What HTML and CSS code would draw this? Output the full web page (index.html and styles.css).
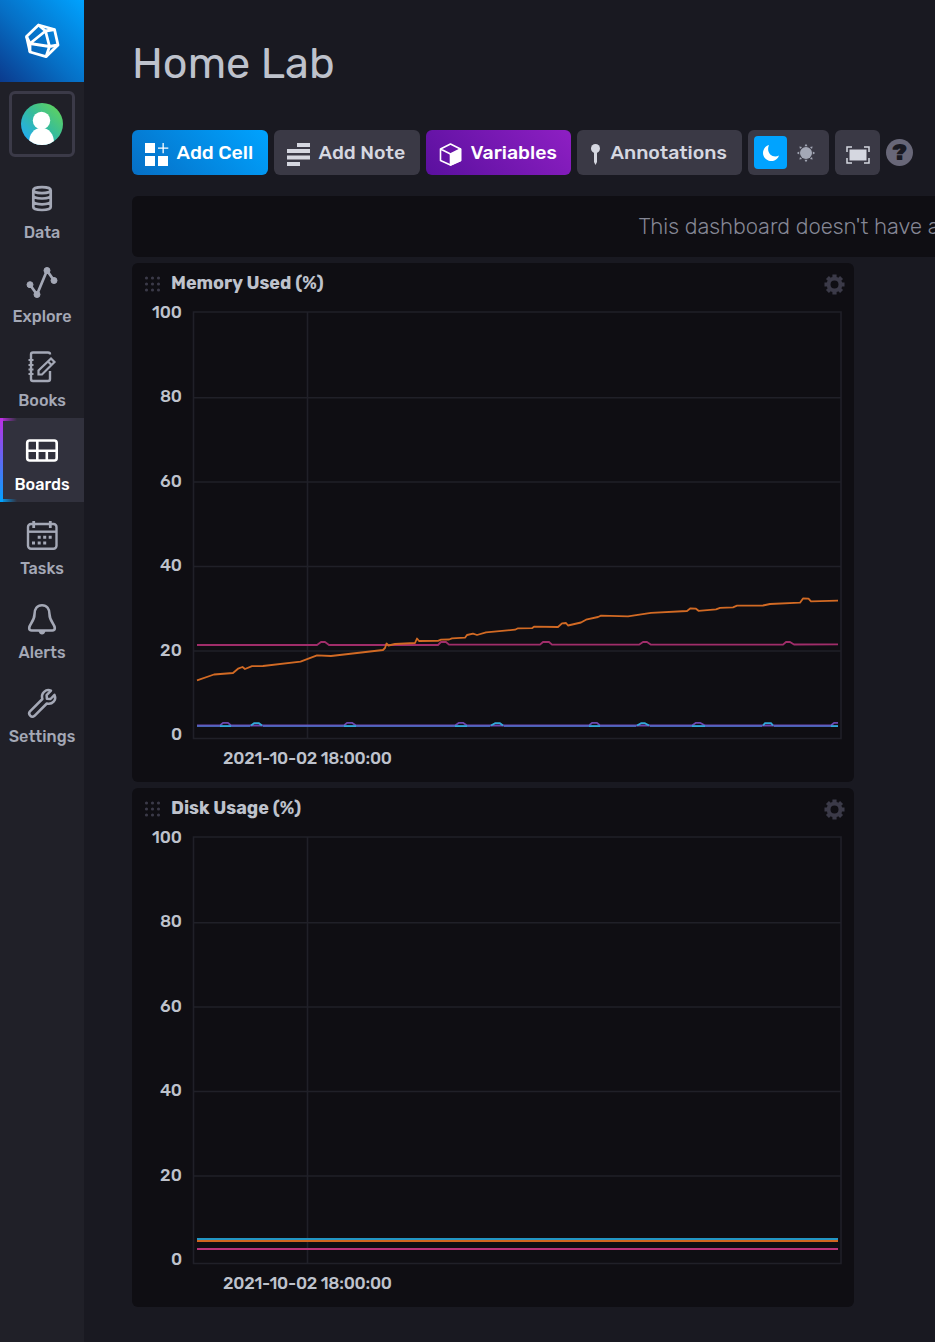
FILE: index.html
```html
<!DOCTYPE html>
<html lang="en">
<head>
  <meta charset="UTF-8" />
  <meta name="viewport" content="width=device-width, initial-scale=1.0"/>
  <title>Home Lab</title>
  <link rel="stylesheet" href="styles.css">
</head>
<body>
  <svg class="defs">
    <symbol id="dots" viewBox="0 0 16 16">
      <g fill="#3b3a48">
        <circle cx="2" cy="2" r="1.6"/><circle cx="8" cy="2" r="1.6"/><circle cx="14" cy="2" r="1.6"/>
        <circle cx="2" cy="8" r="1.6"/><circle cx="8" cy="8" r="1.6"/><circle cx="14" cy="8" r="1.6"/>
        <circle cx="2" cy="14" r="1.6"/><circle cx="8" cy="14" r="1.6"/><circle cx="14" cy="14" r="1.6"/>
      </g>
    </symbol>
    <symbol id="gear" viewBox="0 0 22 22">
      <circle cx="11" cy="11" r="6.2" fill="none" stroke="#3b3a48" stroke-width="4"/>
      <g stroke="#3b3a48" stroke-width="4.4">
        <path d="M11 .5V4M11 18v3.5M.5 11H4M18 11h3.500M3.600 3.600l2.400 2.400M16 16l2.400 2.400M18.400 3.600L16 6M6 16l-2.400 2.400"/>
      </g>
    </symbol>
  </svg>

  <nav class="sidebar">
    <a class="logo" href="#">
      <svg width="36" height="36" viewBox="24 23 36 36" fill="none" stroke="#fff" stroke-width="2.800" stroke-linejoin="round">
        <path d="M38.500 25L54.500 29.500L58 45L46 56.700L30 52L26.500 36.500Z"/>
        <path d="M45.500 31L30 43.500L49.500 46.500ZM38.500 25L45.500 31L54.500 29.500M26.500 36.500L30 43.500V52M58 45L49.500 46.500L46 56.700"/>
      </svg>
    </a>
    <a class="user" href="#">
      <svg width="42" height="42" viewBox="0 0 42 42">
        <defs>
          <linearGradient id="avatar" x1="0" y1="1" x2="1" y2="0">
            <stop offset=".1" stop-color="#22adf6"/><stop offset=".5" stop-color="#34bb9e"/><stop offset="1" stop-color="#6ad84f"/>
          </linearGradient>
          <clipPath id="round"><circle cx="21" cy="21" r="21"/></clipPath>
        </defs>
        <circle cx="21" cy="21" r="21" fill="url(#avatar)"/>
        <g fill="#fff" clip-path="url(#round)">
          <circle cx="20.500" cy="17.500" r="8.700"/>
          <path d="M8 40c0-9 5-15 12.500-15S33 31 33 40v4H8z"/>
        </g>
      </svg>
    </a>
    <a class="item" href="#">
      <svg width="36" height="36" viewBox="24 181 36 36" fill="none" stroke="#a4a8b6" stroke-width="2.700">
        <ellipse cx="42" cy="190.200" rx="8.700" ry="3"/>
        <path d="M33.300 190v17c0 4 17.400 4 17.400 0v-17M33.300 195.500c0 4 17.400 4 17.400 0M33.300 201.300c0 4 17.400 4 17.400 0"/>
      </svg>
      <span>Data</span>
    </a>
    <a class="item" href="#">
      <svg width="36" height="36" viewBox="24 265 36 36" fill="#a4a8b6" stroke="#a4a8b6">
        <path d="M30 284.700L37 294.500L47 270.500L54 280.500" fill="none" stroke-width="2.700"/>
        <circle cx="30" cy="284.700" r="3"/><circle cx="37" cy="294.500" r="3"/><circle cx="47" cy="270.500" r="3"/><circle cx="54" cy="280.500" r="3"/>
      </svg>
      <span>Explore</span>
    </a>
    <a class="item" href="#">
      <svg width="36" height="36" viewBox="24 349 36 36" fill="none" stroke="#a4a8b6" stroke-width="2.400">
        <path d="M50 354.500v-.5q0-1.500-2-1.500H33q-2 0-2 2V379q0 2 2 2h15q2 0 2-2v-8"/>
        <path d="M38.500 374.500v-4L51 358.500l3.500 3.500L42 374.500zM48 361.500l3 3" stroke-width="2.200"/>
        <path d="M28.500 360h5M28.500 365h5M28.500 369.500h5M28.500 374h5" stroke-width="1.800"/>
      </svg>
      <span>Books</span>
    </a>
    <a class="item active" href="#">
      <svg width="36" height="36" viewBox="24 433 36 36" fill="none" stroke="#fff" stroke-width="2.600">
        <rect x="27.200" y="440.500" width="29.500" height="20" rx="2.500"/>
        <path d="M27 450.700h30M37.300 440v21M46.800 450v11"/>
      </svg>
      <span>Boards</span>
    </a>
    <a class="item" href="#">
      <svg width="36" height="36" viewBox="24 517 36 36" fill="none" stroke="#a4a8b6" stroke-width="2.400">
        <rect x="28" y="524" width="28.500" height="24.700" rx="3"/>
        <path d="M28 531.700h29"/>
        <path d="M33.700 521v7M50.300 521v7" stroke-width="2.800"/>
        <path d="M37.700 537.300h3M43.200 537.300h3M48.700 537.300h3M32 543h3M37.700 543h3M43.200 543h3" stroke-width="3"/>
      </svg>
      <span>Tasks</span>
    </a>
    <a class="item" href="#">
      <svg width="36" height="36" viewBox="24 601 36 36" fill="none" stroke="#a4a8b6" stroke-width="2.600">
        <path d="M42 605.200c-5 0-7.500 4-7.500 9 0 7-5.300 10-5.300 13.800q0 2.500 2.500 2.500h20.600q2.500 0 2.500-2.500c0-3.800-5.300-6.800-5.300-13.800 0-5-2.500-9-7.500-9z"/>
        <path d="M38.500 631h7q-1 3.500-3.500 3.500t-3.500-3.500z" fill="#a4a8b6" stroke="none"/>
      </svg>
      <span>Alerts</span>
    </a>
    <a class="item" href="#">
      <svg width="36" height="36" viewBox="24 685 36 36" fill="none" stroke="#a4a8b6" stroke-width="2.500" stroke-linejoin="round">
        <path d="M51 690.700c-5-2.200-10.500 2.500-8.600 8.300L30 711.300c-2.500 3 1.500 7 4.500 4.500L46.800 703.500c5.500 1.500 10-3.500 7.700-8.600L50.500 699l-3.600-.2-.3-3.600z"/>
      </svg>
      <span>Settings</span>
    </a>
  </nav>

  <main class="page">
    <h1>Home Lab</h1>
    <div class="toolbar">
      <button class="btn primary add-cell">
        <svg width="26" height="26" viewBox="0 0 26 26" fill="#fff">
          <path d="M1 1h10v10H1zM1 14h10v10H1zM14 14h10v10H14zM18.500 1h1.300v4.500h4.500v1.300h-4.500v4.500h-1.300V6.800H14V5.500h4.500z"/>
        </svg>
        <span>Add Cell</span>
      </button>
      <button class="btn add-note">
        <svg width="26" height="26" viewBox="0 0 26 26" fill="#d5d7e0">
          <path d="M11 1h13v4H11zM1 7h23v4H1zM1 13.500h23v4H1zM1 20h13v4H1z"/>
        </svg>
        <span>Add Note</span>
      </button>
      <button class="btn purple variables">
        <svg width="26" height="26" viewBox="0 0 26 26" fill="none" stroke="#fff" stroke-width="1.600" stroke-linejoin="round">
          <path d="M12.500 2L22.500 7v11.500L12.500 23 2.500 18.500V7zM2.500 7l10 5"/>
          <path d="M12.500 12l10-5v11.500L12.500 23z" fill="#fff"/>
        </svg>
        <span>Variables</span>
      </button>
      <button class="btn annotations">
        <svg width="13" height="26" viewBox="0 0 13 26" fill="#d5d7e0">
          <circle cx="5.500" cy="6.500" r="4.500"/><path d="M4 9h3v11l-1.500 3L4 20z"/>
        </svg>
        <span>Annotations</span>
      </button>
      <div class="theme">
        <span class="theme-dark">
          <svg width="18" height="18" viewBox="0 0 18 18" fill="#fff"><path d="M7 1a8.200 8.200 0 1 0 10 10.500C11 15 3.500 9 7 1z"/></svg>
        </span>
        <span class="theme-light">
          <svg width="20" height="20" viewBox="0 0 20 20" fill="#a4a8b6">
            <circle cx="10" cy="10" r="6"/>
            <path d="M10 .8l1.500 2.400h-3zM10 19.200l1.500-2.400h-3zM.8 10l2.400-1.500v3zM19.200 10l-2.400-1.500v3zM3.400 3.400l2.700.6L4 6.100zM16.600 3.400l-.6 2.700L13.900 4zM3.400 16.600l.6-2.700L6.100 16zM16.600 16.600l-2.700-.6 2.100-2.100z"/>
          </svg>
        </span>
      </div>
      <button class="btn present">
        <svg width="24" height="18" viewBox="0 0 24 18">
          <path d="M3.500 3.500h17v11h-17z" fill="#d5d7e0"/>
          <path d="M1 6V1h5M18 1h5v5M23 12v5h-5M6 17H1v-5" fill="none" stroke="#d5d7e0" stroke-width="1.500"/>
        </svg>
      </button>
      <span class="help">?</span>
    </div>

    <div class="notice"><span>This dashboard doesn't have any cells with defined variables</span></div>

    <section class="cell">
      <header>
        <svg class="drag"><use href="#dots"/></svg>
        <h2>Memory Used (%)</h2>
        <svg class="gear"><use href="#gear"/></svg>
      </header>
      <svg class="plot" viewBox="132 303 722 479">
        <path class="grid" d="M193.500 312H841V738.500H193.500zM307.500 312V738M193 397.700H841M193 482H841M193 566.500H841M193 651H841"/>
        <g class="axis">
          <text x="152" y="318" textLength="30">100</text>
          <text x="160" y="402" textLength="22">80</text>
          <text x="160" y="487" textLength="22">60</text>
          <text x="160" y="571" textLength="22">40</text>
          <text x="160" y="656" textLength="22">20</text>
          <text x="171" y="740" textLength="11">0</text>
          <text x="223" y="764" textLength="169">2021-10-02 18:00:00</text>
        </g>
        <g class="lines">
          <path stroke="#a02d6a" d="M197 645H317L321 642H325L329 645H438L441 642H446L449 644.700H540L543 642H549L552 644.700H639L643 642H647L651 644.700H783L786 642H790L794 644.500L838 644.300"/>
          <path stroke="#6d47ae" d="M197 725.500H220L223 722.800H228L231 725.500H344L347 722.800H352L356 725.500H455L459 722.800H463L467 725.500H589L592 722.800H597L600 725.500H692L696 722.800H700L705 725.500H831L834 722.800H838"/>
          <path stroke="#4a78cf" stroke-width="1.200" d="M197 726.200H250M263 726.200H490M504 726.200H636M650 726.200H762M774 726.200H838"/>
          <path stroke="#31a9d9" d="M251 725.500L254 723.200H259L262 725.500M491 725.500L495 723.200H500L503 725.500M637 725.500L641 723.200H645L649 725.500M763 725.500L765 723.200H771L773 725.500M220 726.200H231M344 726.200H356M455 726.200H467M589 726.200H600M692 726.200H705M831 726.200H838"/>
          <path stroke="#d26a24" d="M197 680.300L214 674.500L233 673L238 668.700L242.500 667L245 669L252 666.200L263 666L300.500 661.700L317 655.300L331 656L383 650L385 648L386.500 643.500L388.500 645.500L395 644L415 643L417 638.500L419 641L438 640.800L441 639.700L449 639.500L452 638.300L465 637.700L467 635L473 633.700L477 635L486 632.300L515 629.700L518 628.300L532 628.200L534 626.700L558 627L562 623.300L566 623L568 625.500L581 622.500L586 619.700L598 617L601 615.700L628 616.300L651 612.800L687 611L690.500 608.300L696 608.700L698.500 610.800L716 609.300L720 607.800L733 607.300L737 605.700L763 605.500L770 604L800 602.700L803 598.500L808.500 598.700L811 601.300L838 600.700"/>
        </g>
      </svg>
    </section>

    <section class="cell">
      <header>
        <svg class="drag"><use href="#dots"/></svg>
        <h2>Disk Usage (%)</h2>
        <svg class="gear"><use href="#gear"/></svg>
      </header>
      <svg class="plot" viewBox="132 303 722 479">
        <path class="grid" d="M193.500 312H841V738.500H193.500zM307.500 312V738M193 397.700H841M193 482H841M193 566.500H841M193 651H841"/>
        <g class="axis">
          <text x="152" y="318" textLength="30">100</text>
          <text x="160" y="402" textLength="22">80</text>
          <text x="160" y="487" textLength="22">60</text>
          <text x="160" y="571" textLength="22">40</text>
          <text x="160" y="656" textLength="22">20</text>
          <text x="171" y="740" textLength="11">0</text>
          <text x="223" y="764" textLength="169">2021-10-02 18:00:00</text>
        </g>
        <g class="lines flat">
          <path stroke="#2396c4" d="M197 714H838"/>
          <path stroke="#cf6620" d="M197 716H838"/>
          <path stroke="#b83279" d="M197 724H838"/>
        </g>
      </svg>
    </section>
  </main>
</body>
</html>
```
FILE: styles.css
```css
* {
  box-sizing: border-box;
}

body {
  margin: 0;
  display: flex;
  height: 1342px;
  overflow: hidden;
  background: #191921;
  color: #bec2cc;
  font-family: Rubik, Roboto, sans-serif;
}

svg {
  display: block;
  flex-shrink: 0;
}

.defs {
  display: none;
}

.sidebar {
  width: 84px;
  flex-shrink: 0;
  background: #202028;
}

.sidebar a {
  text-decoration: none;
}

.logo {
  display: flex;
  align-items: center;
  justify-content: center;
  height: 82px;
  background: linear-gradient(45deg, #0b3a8d, #066fc5 45%, #00a3ff);
}

.user {
  display: flex;
  align-items: center;
  justify-content: center;
  width: 66px;
  height: 66px;
  margin: 9px;
  border: 3px solid #3b3a48;
  border-radius: 6px;
}

.item {
  display: flex;
  flex-direction: column;
  align-items: center;
  height: 84px;
  padding-top: 15px;
  color: #a4a8b6;
  font-size: 16.2px;
  font-weight: 500;
  line-height: 20px;
}

.item span {
  margin-top: 6px;
}

.active {
  background:
    linear-gradient(#be2ee4, #00a3ff) left / 3px 100% no-repeat,
    linear-gradient(90deg, #be2ee4, transparent) top left / 17px 3px no-repeat,
    linear-gradient(90deg, #00a3ff, transparent) bottom left / 17px 3px no-repeat,
    #31313d;
  color: #fff;
}

.page {
  flex: 1;
  min-width: 0;
  padding-left: 48px;
}

h1 {
  margin: 0;
  padding-top: 34px;
  height: 130px;
  font-size: 43.2px;
  font-weight: 400;
  line-height: 60px;
}

.toolbar {
  display: flex;
  gap: 6px;
  height: 45px;
}

.btn {
  display: flex;
  align-items: center;
  gap: 6.5px;
  height: 45px;
  padding: 0 0 0 12px;
  border: none;
  border-radius: 6px;
  background: #3a3945;
  color: #d5d7e0;
  font-family: inherit;
  font-size: 19.5px;
  font-weight: 500;
  white-space: nowrap;
}

.btn svg {
  margin-top: 5px;
}

.primary {
  background: linear-gradient(45deg, #066fc5, #00a3ff);
  color: #fff;
}

.purple {
  background: linear-gradient(45deg, #5a109e, #8e1fc3);
  color: #fff;
}

.add-cell {
  width: 136px;
}

.add-note {
  width: 146px;
}

.variables {
  width: 145px;
}

.annotations {
  width: 165px;
  padding-left: 13px;
  gap: 7.5px;
}

.theme {
  display: flex;
  align-items: center;
  gap: 2px;
  width: 81px;
  padding: 6px;
  border-radius: 6px;
  background: #3a3945;
}

.theme span {
  display: flex;
  align-items: center;
  justify-content: center;
  width: 33px;
  height: 33px;
  border-radius: 4px;
}

.theme-dark {
  background: #00a3ff;
}

.present {
  width: 45px;
  padding-left: 10.5px;
}

.present svg {
  margin-top: 4px;
}

.help {
  width: 27px;
  height: 27px;
  margin-top: 9px;
  border-radius: 50%;
  background: #686778;
  color: #191921;
  font-size: 23px;
  font-weight: 900;
  line-height: 27px;
  text-align: center;
}

.notice {
  height: 61px;
  margin: 21px 0 6px;
  padding-left: 506.5px;
  overflow: hidden;
  border-radius: 6px 0 0 6px;
  background: #0f0e13;
  color: #858795;
  font-size: 22px;
  font-weight: 300;
  line-height: 61px;
  white-space: nowrap;
}

.cell {
  width: 722px;
  height: 519px;
  margin-bottom: 6px;
  border-radius: 6px;
  background: #0f0e13;
}

.cell header {
  display: flex;
  align-items: center;
  height: 40px;
  padding: 0 9px 0 12px;
}

.drag {
  width: 17px;
  height: 16px;
  margin-top: 1px;
}

h2 {
  flex: 1;
  margin: 0 0 0 10px;
  font-size: 18px;
  font-weight: 700;
}

.gear {
  width: 21px;
  height: 21px;
  margin-top: 3px;
}

.plot {
  width: 722px;
  height: 479px;
}

.grid {
  fill: none;
  stroke: #202028;
  stroke-width: 1.6;
}

.axis {
  fill: #bec2cc;
  font-size: 17px;
  font-weight: 500;
}

.lines {
  fill: none;
  stroke-width: 1.8;
  stroke-linejoin: round;
}

.flat {
  stroke-width: 2;
}
```
